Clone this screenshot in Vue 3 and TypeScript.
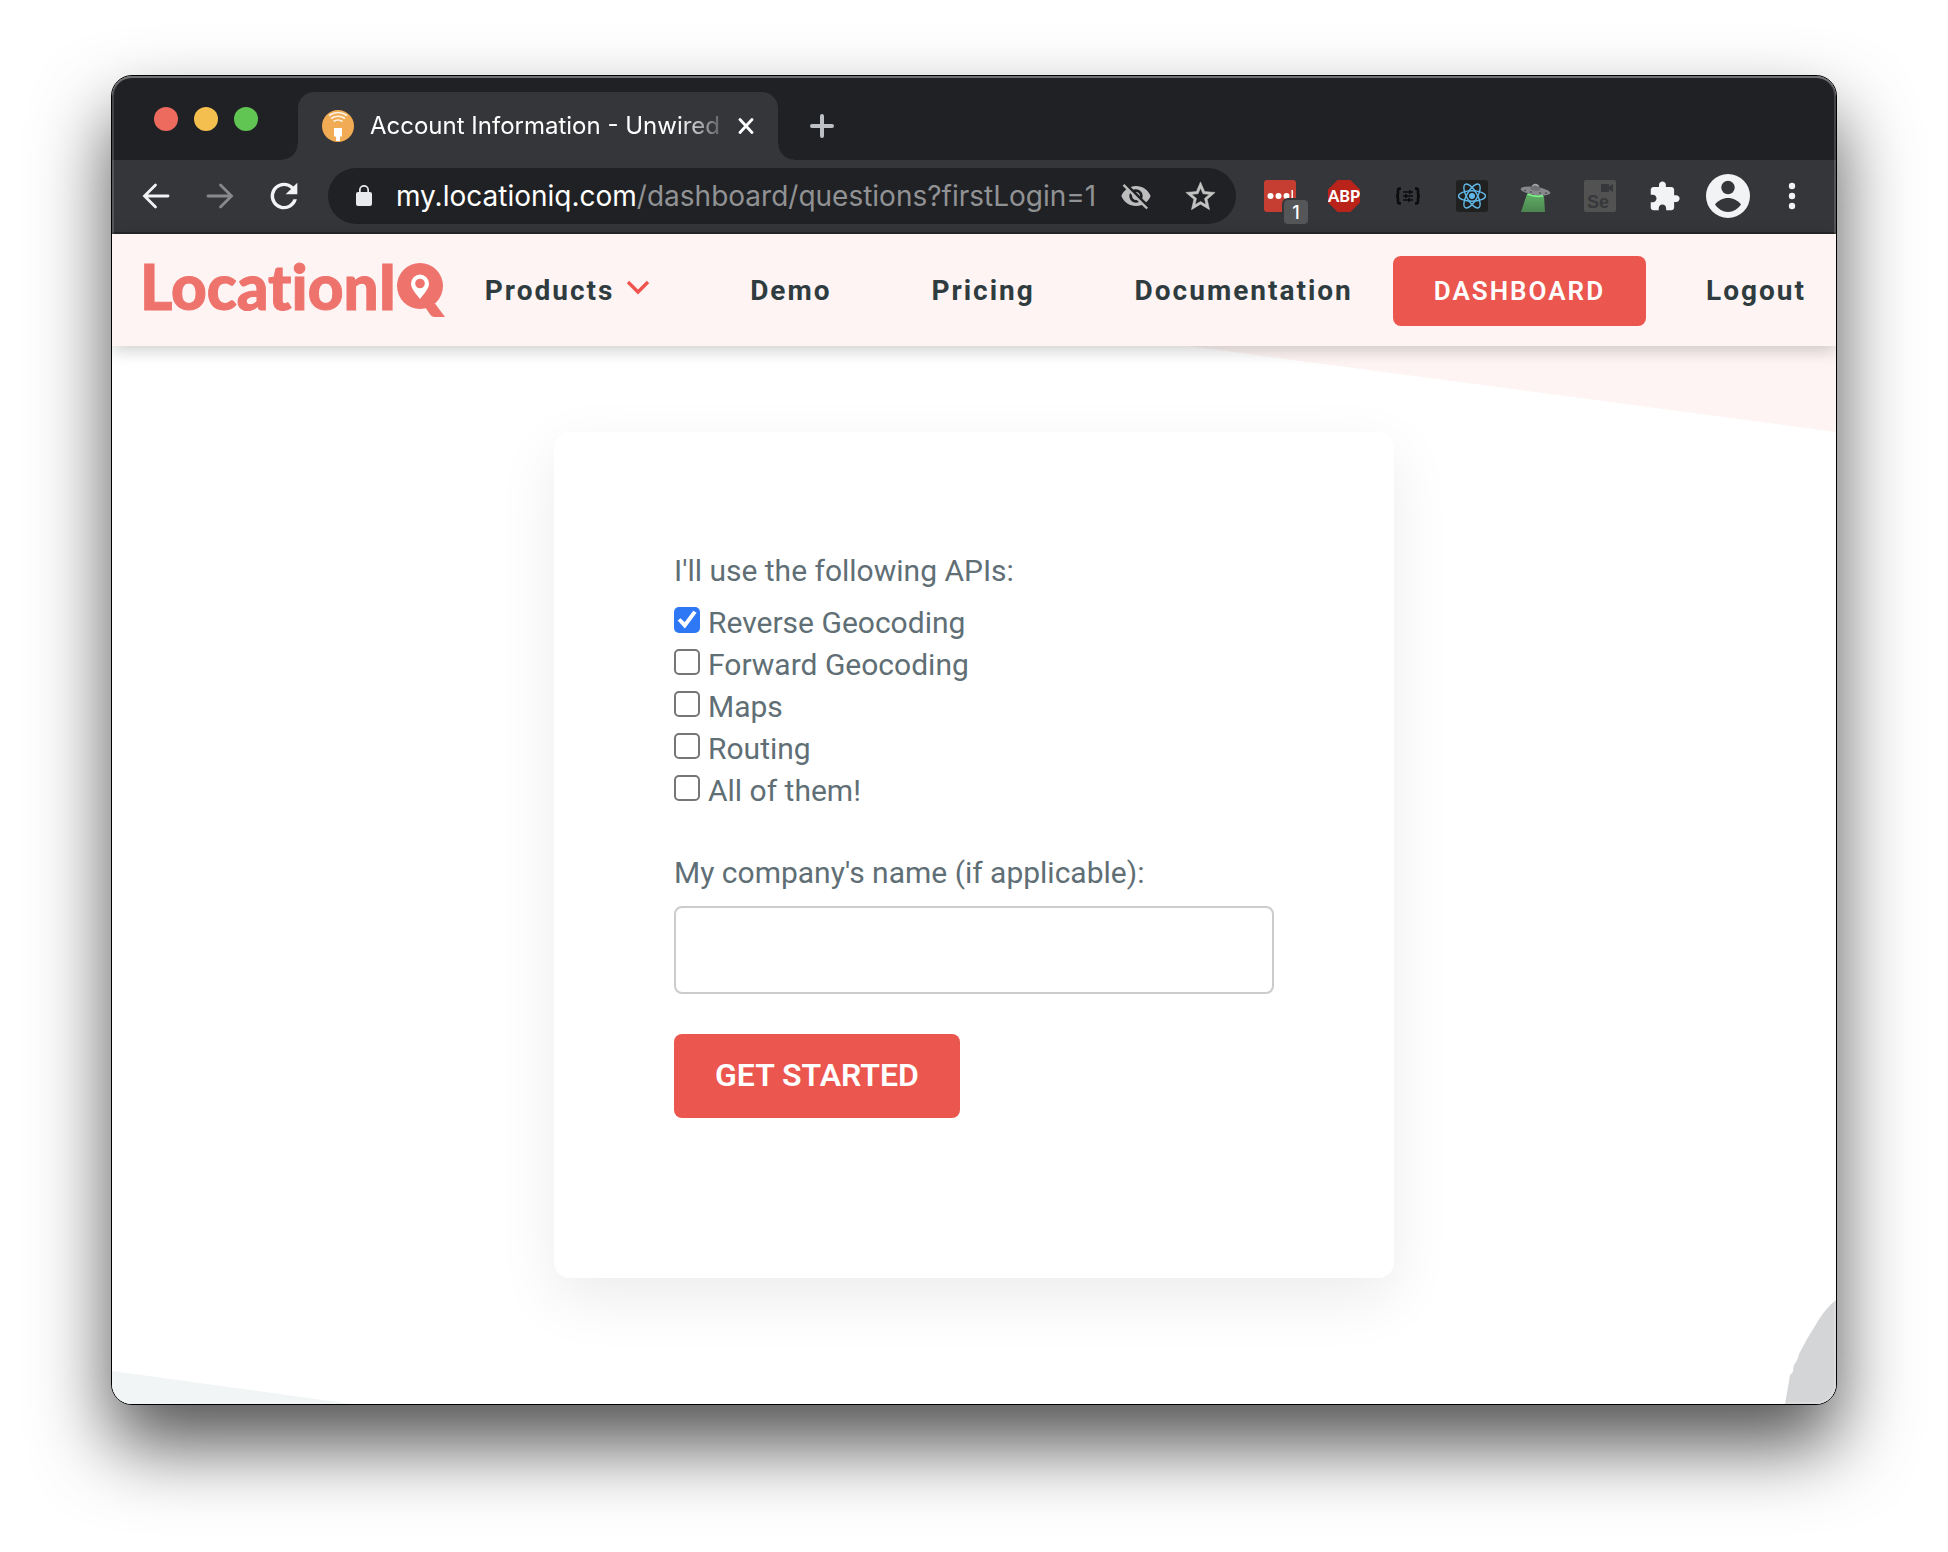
<script setup lang="ts">
import { ref } from 'vue'

interface ApiOption {
  id: string
  label: string
}

const apis: ApiOption[] = [
  { id: 'reverse', label: 'Reverse Geocoding' },
  { id: 'forward', label: 'Forward Geocoding' },
  { id: 'maps', label: 'Maps' },
  { id: 'routing', label: 'Routing' },
  { id: 'all', label: 'All of them!' },
]

const selected = ref<string[]>(['reverse'])
const company = ref('')
</script>

<template>
  <div class="desktop">
    <div class="window">
      <div class="tabstrip">
        <div class="lights">
          <button class="light close" type="button" aria-label="Close window"></button>
          <button class="light minimise" type="button" aria-label="Minimise window"></button>
          <button class="light maximise" type="button" aria-label="Maximise window"></button>
        </div>
        <div class="tab">
          <svg class="favicon" width="32" height="32" viewBox="0 0 32 32" aria-hidden="true">
            <circle cx="16" cy="16" r="16" fill="#f0ab54" />
            <g fill="none" stroke="#fff" stroke-width="1.6" opacity=".85">
              <path d="M7 5.500q9-6 18 0" />
              <path d="M9 8.500q7-4.500 14 0" />
              <path d="M11.500 11.500q4.500-3 9 0" />
            </g>
            <path d="M12 18h8v8.500h-2V31h-4v-4.500h-2z" fill="#fff" />
          </svg>
          <span class="tab-title">Account Information - Unwired</span>
          <button class="icon-btn tab-close" type="button" aria-label="Close tab">
            <svg width="16" height="16" viewBox="0 0 16 16"><path d="M2 1.500l12 13M14 1.500L2 14.500" stroke="#fff" stroke-width="2.800" stroke-linecap="round" /></svg>
          </button>
        </div>
        <button class="icon-btn new-tab" type="button" aria-label="New tab">
          <svg width="24" height="24" viewBox="0 0 24 24"><path d="M12 2v20M2 12h20" stroke="#bdc1c6" stroke-width="4" stroke-linecap="round" /></svg>
        </button>
      </div>

      <div class="toolbar">
        <div class="cells">
          <button class="icon-btn cell" type="button" aria-label="Back">
            <svg width="28" height="28" viewBox="0 0 28 28" fill="none" stroke="#f1f3f4" stroke-width="2.800" stroke-linecap="round"><path d="M26 14H3M13.500 3L2.500 14l11 11" /></svg>
          </button>
          <button class="icon-btn cell" type="button" aria-label="Forward">
            <svg width="28" height="28" viewBox="0 0 28 28" fill="none" stroke="#88898b" stroke-width="2.800" stroke-linecap="round"><path d="M2 14h23M14.500 3l11 11-11 11" /></svg>
          </button>
          <button class="icon-btn cell" type="button" aria-label="Reload">
            <svg width="40" height="40" viewBox="0 0 24 24" fill="#f1f3f4"><path d="M17.650 6.350A7.958 7.958 0 0 0 12 4a8 8 0 1 0 7.730 10h-2.080A6 6 0 1 1 12 6c1.660 0 3.140.690 4.220 1.780L13 11h7V4l-2.350 2.350z" /></svg>
          </button>
        </div>
        <div class="omnibox">
          <svg class="lock" width="24" height="24" viewBox="0 0 24 24" fill="#e8eaed" aria-hidden="true"><path d="M18 8h-1V6A5 5 0 0 0 7 6v2H6a2 2 0 0 0-2 2v10c0 1.100.900 2 2 2h12a2 2 0 0 0 2-2V10a2 2 0 0 0-2-2zM8.700 8V6a3.300 3.300 0 0 1 6.600 0v2z" /></svg>
          <span class="url">my.locationiq.com<span class="path">/dashboard/questions?firstLogin=1</span></span>
          <button class="icon-btn cell" type="button" aria-label="Third-party cookies blocked">
            <svg width="32" height="32" viewBox="0 0 24 24" fill="#bdbdbd"><path d="M12 7c2.760 0 5 2.240 5 5 0 .650-.130 1.260-.360 1.830l2.920 2.920c1.510-1.260 2.700-2.890 3.430-4.750-1.730-4.390-6-7.500-11-7.500-1.400 0-2.740.250-3.980.700l2.160 2.160C10.740 7.130 11.350 7 12 7zM2 4.270l2.280 2.280.460.460C3.080 8.300 1.780 10.020 1 12c1.730 4.390 6 7.500 11 7.500 1.550 0 3.030-.300 4.380-.840l.420.420L19.730 22 21 20.730 3.270 3 2 4.270zM7.530 9.800l1.550 1.550c-.050.210-.080.430-.080.650 0 1.660 1.340 3 3 3 .220 0 .440-.030.650-.080l1.550 1.550c-.670.330-1.410.530-2.200.530-2.760 0-5-2.240-5-5 0-.790.200-1.530.530-2.200zm4.310-.780l3.150 3.150.020-.160c0-1.660-1.340-3-3-3l-.170.010z" /></svg>
          </button>
          <button class="icon-btn cell" type="button" aria-label="Bookmark this page">
            <svg width="35" height="35" viewBox="0 0 24 24" fill="#c4c4c4" stroke="#c4c4c4" stroke-width=".4"><path d="M22 9.240l-7.190-.620L12 2 9.190 8.630 2 9.240l5.460 4.730L5.820 21 12 17.270 18.180 21l-1.630-7.030L22 9.240zM12 15.400l-3.760 2.270 1-4.280-3.320-2.880 4.380-.380L12 6.100l1.710 4.040 4.380.380-3.320 2.880 1 4.280L12 15.400z" /></svg>
          </button>
        </div>
        <div class="cells">
          <button class="icon-btn cell" type="button" aria-label="Password manager, 1 notification">
            <svg width="32" height="32" viewBox="0 0 32 32"><rect width="32" height="32" rx="3" fill="#c63d31" /><g fill="#fff"><circle cx="6.500" cy="16" r="3" /><circle cx="14.500" cy="16" r="3" /><circle cx="22.500" cy="16" r="3" /><path d="M27.500 10h1.500v12h-1.500z" /></g></svg>
            <span class="badge">1</span>
          </button>
          <button class="icon-btn cell" type="button" aria-label="Adblock Plus">
            <span class="abp">ABP</span>
          </button>
          <button class="icon-btn cell" type="button" aria-label="JSON viewer">
            <svg width="26" height="18" viewBox="0 0 26 18" fill="none" stroke="#0c0c0d" stroke-width="2.600"><path d="M6 1.500H5q-2 0-2 2v3Q3 9 1 9q2 0 2 2.500v3q0 2 2 2h1M20 1.500h1q2 0 2 2v3Q23 9 25 9q-2 0-2 2.500v3q0 2-2 2h-1" /><path d="M8 5h10M8 9h10M8 13h10" stroke-width="1.600" /><path d="M15 3v4M11 7v4M14 11v4" stroke-width="1.600" /></svg>
          </button>
          <button class="icon-btn cell" type="button" aria-label="React developer tools">
            <svg width="32" height="32" viewBox="0 0 32 32"><rect width="32" height="32" rx="3" fill="#202020" /><circle cx="16" cy="16" r="3" fill="#61b8e8" /><g fill="none" stroke="#61b8e8" stroke-width="1.400"><ellipse cx="16" cy="16" rx="13.500" ry="5.200" /><ellipse cx="16" cy="16" rx="13.500" ry="5.200" transform="rotate(60 16 16)" /><ellipse cx="16" cy="16" rx="13.500" ry="5.200" transform="rotate(120 16 16)" /></g></svg>
          </button>
          <button class="icon-btn cell" type="button" aria-label="UFO extension">
            <svg width="32" height="32" viewBox="0 0 32 32">
              <defs><linearGradient id="beam" x1="0" y1="0" x2="0" y2="1"><stop offset="0" stop-color="#5fae64" /><stop offset="1" stop-color="#4c8550" /></linearGradient></defs>
              <path d="M7 14L1 32h24l-1-16z" fill="url(#beam)" />
              <ellipse cx="15.500" cy="11" rx="15" ry="4" fill="#87888c" transform="rotate(8 15.500 11)" />
              <path d="M10.500 9c0-6 10-6 10 .800q-5 3-10-.800z" fill="#6f7074" />
              <path d="M12.500 6q3-3 6 .300" fill="none" stroke="#a8a9ac" stroke-width="1.500" />
              <path d="M7.500 14q8 3.600 15.500 1.700" fill="none" stroke="#7df08a" stroke-width="1.800" />
              <g fill="#55565a"><circle cx="5" cy="10.500" r="1" /><circle cx="11" cy="12" r="1" /><circle cx="20" cy="13" r="1" /><circle cx="26" cy="13" r="1" /></g>
            </svg>
          </button>
          <button class="icon-btn cell" type="button" aria-label="Selenium IDE">
            <span class="selenium">
              <svg width="12" height="8" viewBox="0 0 12 8" fill="#37383b"><path d="M0 0h8v2.500L12 0v8L8 5.500V8H0z" /></svg>
              <span>Se</span>
            </span>
          </button>
          <button class="icon-btn cell" type="button" aria-label="Extensions">
            <svg width="33" height="33" viewBox="0 0 24 24" fill="#f1f3f4"><path d="M20.500 11H19V7c0-1.100-.900-2-2-2h-4V3.500C13 2.120 11.880 1 10.500 1S8 2.120 8 3.500V5H4c-1.100 0-1.990.900-1.990 2v3.800H3.500c1.490 0 2.700 1.210 2.700 2.700s-1.210 2.700-2.700 2.700H2V20c0 1.100.900 2 2 2h3.800v-1.500c0-1.490 1.210-2.700 2.700-2.700 1.490 0 2.700 1.210 2.700 2.700V22H17c1.100 0 2-.900 2-2v-4h1.500c1.380 0 2.500-1.120 2.500-2.500S21.880 11 20.500 11z" /></svg>
          </button>
          <button class="icon-btn cell" type="button" aria-label="Profile">
            <svg width="44" height="44" viewBox="0 0 44 44"><circle cx="22" cy="22" r="22" fill="#f1f3f4" /><circle cx="22" cy="13.500" r="6.700" fill="#35363a" /><path d="M9 30.500C12 26.500 17 24 22 24s10 2.500 13 6.500C32 35 27 38 22 38S12 35 9 30.500z" fill="#35363a" /></svg>
          </button>
          <button class="icon-btn cell" type="button" aria-label="Menu">
            <svg width="8" height="28" viewBox="0 0 8 28" fill="#f1f3f4"><circle cx="4" cy="4" r="3.200" /><circle cx="4" cy="14" r="3.200" /><circle cx="4" cy="24" r="3.200" /></svg>
          </button>
        </div>
      </div>

      <div class="page">
        <header class="site-header">
          <a class="logo" href="#" aria-label="LocationIQ">
            <span>LocationI</span>
            <svg width="48" height="56" viewBox="0 0 48 56">
              <path d="M28 44L38 40.500 48 54H37.500Q35 54 33.500 52z" fill="#ee736d" />
              <circle cx="23" cy="23" r="23" fill="#ee736d" />
              <path d="M23 36C19 30.500 14 26 14 20.500a9 9 0 0 1 18 0C32 26 27 30.500 23 36z" fill="#fff" />
              <circle cx="23" cy="20.500" r="4.800" fill="#ee736d" />
            </svg>
          </a>
          <nav class="nav">
            <a class="products" href="#">Products
              <svg width="24" height="16" viewBox="0 0 24 16" aria-hidden="true"><path d="M2 2l10 10L22 2" fill="none" stroke="#f0544f" stroke-width="3.400" /></svg>
            </a>
            <a href="#">Demo</a>
            <a href="#">Pricing</a>
            <a href="#">Documentation</a>
          </nav>
          <a class="dashboard" href="#">DASHBOARD</a>
          <a class="logout" href="#">Logout</a>
        </header>

        <main class="content">
          <svg class="decor decor-top" width="648" height="86" viewBox="0 0 648 86" aria-hidden="true"><path d="M0 0h648v86z" fill="#fdf4f3" /></svg>
          <svg class="decor decor-left" width="240" height="33" viewBox="0 0 240 33" aria-hidden="true"><path d="M0 0l240 33H0z" fill="#f1f5f6" /></svg>
          <svg class="decor decor-right" width="51" height="104" viewBox="0 0 51 104" aria-hidden="true"><path d="M51 0Q40 9 33 21 22 38 14 54q-1 6-5 11-1 3-1 7l-3 3Q3 88 0 104h51z" fill="#d4d5d7" /></svg>

          <form class="card" @submit.prevent>
            <fieldset class="group">
              <legend>I'll use the following APIs:</legend>
              <label v-for="api in apis" :key="api.id" class="option">
                <input v-model="selected" type="checkbox" :value="api.id" />
                <span>{{ api.label }}</span>
              </label>
            </fieldset>
            <label class="company-label" for="company">My company's name (if applicable):</label>
            <input id="company" v-model="company" class="company" type="text" />
            <button class="submit" type="submit">GET STARTED</button>
          </form>
        </main>
      </div>
    </div>
  </div>
</template>

<style>
body {
  margin: 0;
  background: #fff;
}
</style>

<style scoped>
* {
  box-sizing: border-box;
}

.desktop {
  padding: 75px 111px 147px;
  overflow: hidden;
  font-family: Roboto, 'Liberation Sans', sans-serif;
}

.window {
  position: relative;
  border: 1px solid #000;
  border-radius: 21px;
  overflow: hidden;
  background: #fff;
  box-shadow: 0 40px 76px rgba(0, 0, 0, 0.68);
}

/* light rim that the system draws inside the window edge */
.window::after {
  content: '';
  position: absolute;
  inset: 0;
  border-radius: 20px;
  box-shadow: inset 0 0 0 2px rgba(255, 255, 255, 0.16), inset 0 2px 0 rgba(255, 255, 255, 0.24);
  pointer-events: none;
}

.icon-btn {
  display: flex;
  align-items: center;
  justify-content: center;
  padding: 0;
  border: 0;
  background: none;
}

.icon-btn svg {
  display: block;
}

/* tab strip */
.tabstrip {
  display: flex;
  align-items: center;
  height: 84px;
  background: #202124;
}

.lights {
  display: flex;
  gap: 16px;
  width: 186px;
  padding: 2px 0 0 42px;
}

.light {
  width: 24px;
  height: 24px;
  padding: 0;
  border: 0;
  border-radius: 50%;
}

.close {
  background: #ed6a5e;
}

.minimise {
  background: #f5bf4f;
}

.maximise {
  background: #61c554;
}

.tab {
  position: relative;
  display: flex;
  align-items: center;
  align-self: flex-end;
  width: 480px;
  height: 68px;
  padding: 0 20px 0 24px;
  border-radius: 16px 16px 0 0;
  background: #35363a;
}

.tab::before,
.tab::after {
  content: '';
  position: absolute;
  bottom: 0;
  width: 16px;
  height: 16px;
}

.tab::before {
  right: 100%;
  background: radial-gradient(circle at 0 0, transparent 15px, #35363a 16px);
}

.tab::after {
  left: 100%;
  background: radial-gradient(circle at 100% 0, transparent 15px, #35363a 16px);
}

.tab-title {
  flex: 1;
  margin-left: 16px;
  font: 24px/32px Inter, sans-serif;
  color: #fff;
  white-space: nowrap;
  mask-image: linear-gradient(90deg, #000 calc(100% - 44px), rgba(0, 0, 0, 0.2));
}

.tab-close {
  width: 24px;
  height: 24px;
  margin-left: 12px;
}

.new-tab {
  width: 56px;
  height: 56px;
  margin: 16px 0 0 16px;
}

/* toolbar */
.toolbar {
  display: flex;
  align-items: center;
  gap: 12px;
  height: 74px;
  padding: 0 12px;
  border-bottom: 2px solid #262629;
  background: #35363a;
}

.cells {
  display: flex;
}

.cell {
  position: relative;
  width: 64px;
  height: 56px;
  flex: none;
}

.omnibox {
  display: flex;
  flex: 1;
  align-items: center;
  min-width: 0;
  height: 56px;
  padding: 0 4px 0 24px;
  border-radius: 28px;
  background: #202124;
}

.lock {
  flex: none;
}

.url {
  flex: 1;
  margin-left: 20px;
  overflow: hidden;
  font: 28px/40px Inter, sans-serif;
  color: #fff;
  white-space: nowrap;
}

.path {
  color: #919294;
}

.badge {
  position: absolute;
  right: 4px;
  bottom: 0;
  width: 24px;
  height: 24px;
  border-radius: 4px;
  background: #555658;
  box-shadow: 0 0 0 2px #35363a;
  font: 500 18px/26px Inter, sans-serif;
  color: #fff;
  text-align: center;
}

.abp {
  width: 32px;
  height: 32px;
  background: #b9231a;
  clip-path: polygon(30% 0, 70% 0, 100% 30%, 100% 70%, 70% 100%, 30% 100%, 0 70%, 0 30%);
  font: 900 16px/32px Lato, sans-serif;
  color: #fff;
  text-align: center;
}

.selenium {
  display: flex;
  flex-direction: column;
  align-items: flex-start;
  width: 32px;
  height: 32px;
  padding: 4px 3px 0;
  border-radius: 2px;
  background: #525252;
  font: 700 18px/20px 'Liberation Sans', sans-serif;
  color: #37383b;
}

.selenium svg {
  align-self: flex-end;
}

/* site header */
.site-header {
  position: relative;
  z-index: 1;
  display: flex;
  align-items: center;
  height: 112px;
  padding: 2px 30px 0 28px;
  background: #fdf4f3;
  box-shadow: 0 4px 16px rgba(0, 0, 0, 0.2);
  font-size: 28px;
  font-weight: 700;
  line-height: 40px;
  letter-spacing: 2px;
}

.site-header a {
  color: #2f3c3f;
  text-decoration: none;
}

.site-header .logo {
  display: flex;
  align-items: flex-start;
  color: #ee736d;
  font: 900 62px/46px Lato, sans-serif;
  font-variant-ligatures: none;
  letter-spacing: normal;
  -webkit-text-stroke: 1px #ee736d;
}

.nav {
  display: flex;
  flex: 1;
  justify-content: space-between;
  margin: 0 40px;
}

.products {
  display: flex;
  align-items: center;
  gap: 12px;
}

.products svg {
  margin-bottom: 6px;
}

.site-header .dashboard {
  padding: 15px 41px;
  border-radius: 8px;
  background: #eb564f;
  color: #fff;
  font-size: 26px;
  font-weight: 600;
}

.logout {
  margin-left: 60px;
}

/* page body */
.content {
  position: relative;
  display: flex;
  justify-content: center;
  padding: 86px 32px 126px;
}

.decor {
  position: absolute;
}

.decor-top {
  top: 0;
  right: 0;
}

.decor-left {
  bottom: 0;
  left: 0;
}

.decor-right {
  right: 0;
  bottom: 0;
}

.card {
  position: relative;
  display: flex;
  flex-direction: column;
  align-items: flex-start;
  width: 100%;
  max-width: 840px;
  padding: 118px 120px 160px;
  border-radius: 16px;
  background: #fff;
  box-shadow: 0 20px 60px rgba(0, 0, 0, 0.08);
  color: #5f6f75;
  font-size: 30px;
  line-height: 42px;
}

.group {
  margin: 0 0 40px;
  padding: 0;
  border: 0;
}

.group legend {
  margin-bottom: 10px;
  padding: 0;
}

.option {
  display: flex;
  gap: 8px;
}

.option input {
  width: 26px;
  height: 26px;
  margin: 5px 0 0;
  appearance: none;
  border: 2px solid #767676;
  border-radius: 5px;
  background: #fff;
}

.option input:checked {
  display: grid;
  border: 0;
  background: #2e78f6;
}

.option input:checked::before {
  content: '';
  background: #fff;
  clip-path: polygon(14% 52%, 25% 43%, 41% 59%, 74% 14%, 87% 22%, 42% 83%);
}

.company-label {
  margin-bottom: 12px;
}

.company {
  width: 100%;
  height: 88px;
  padding: 0 24px;
  border: 2px solid #ccc;
  border-radius: 8px;
  background: #fff;
  color: inherit;
  font: inherit;
}

.submit {
  height: 84px;
  margin-top: 40px;
  padding: 0 41px 2px;
  border: 0;
  border-radius: 8px;
  background: #eb564f;
  color: #fff;
  font: 600 32px/40px Roboto, sans-serif;
}
</style>
